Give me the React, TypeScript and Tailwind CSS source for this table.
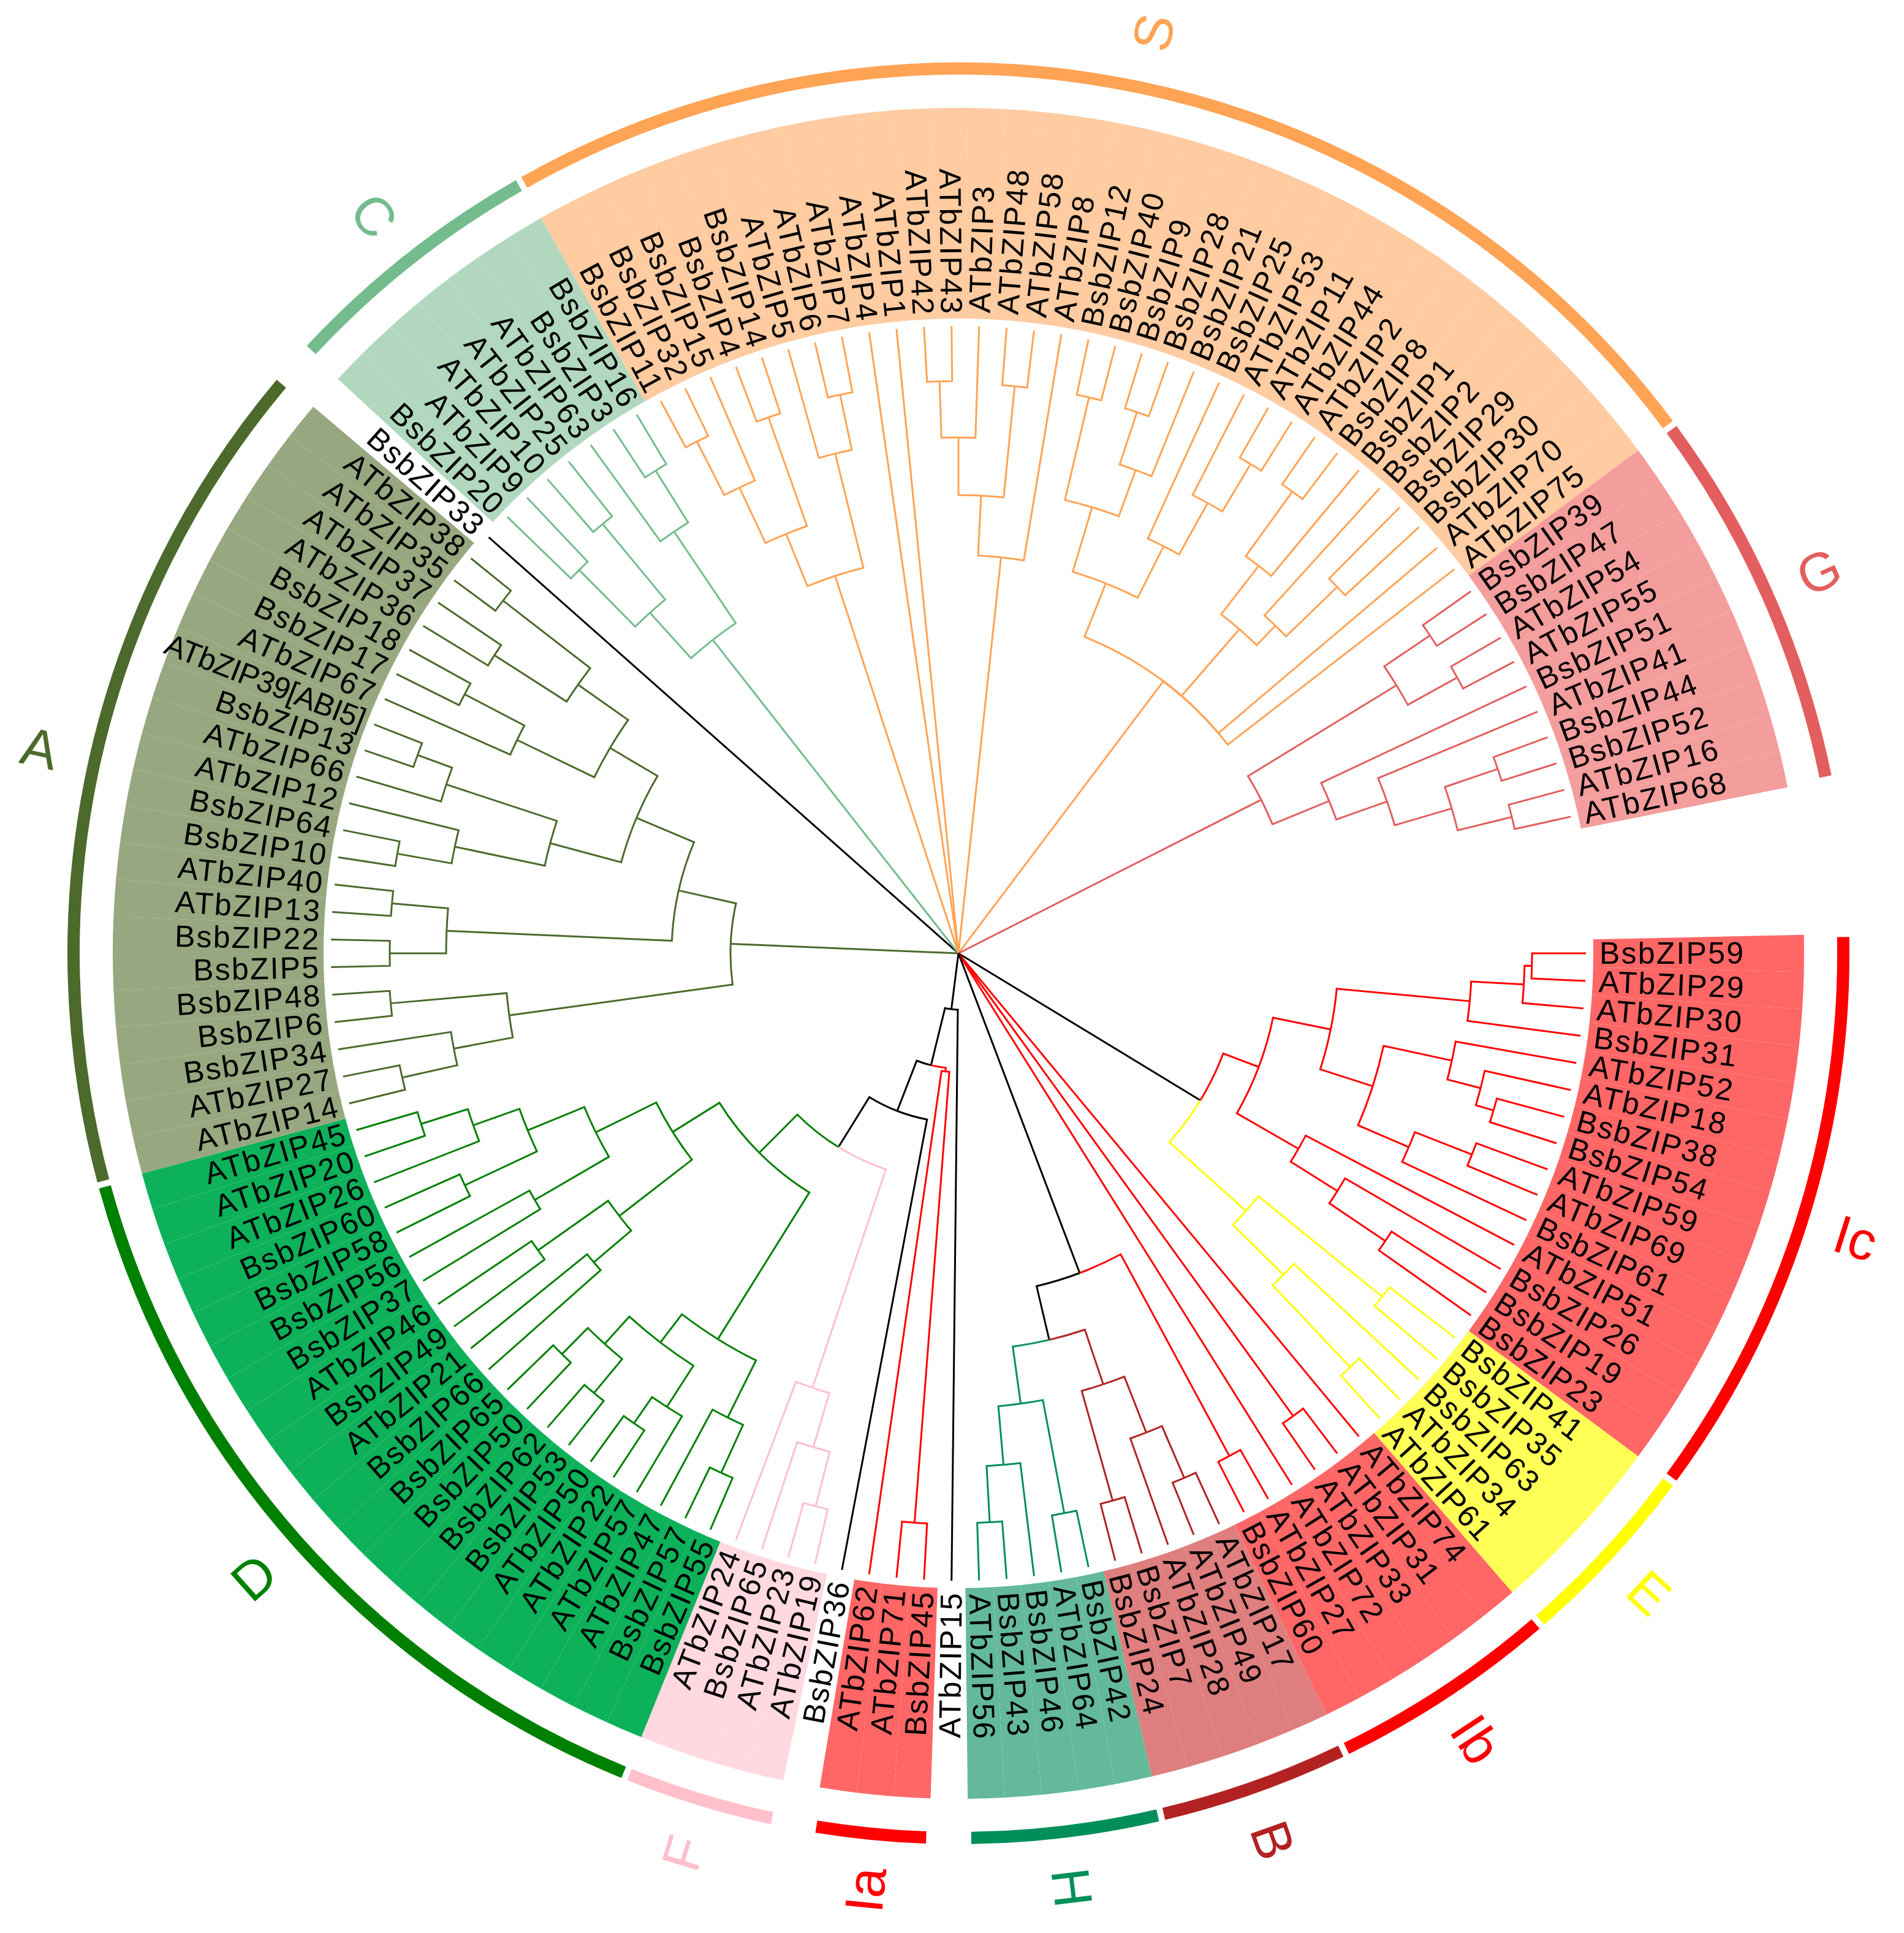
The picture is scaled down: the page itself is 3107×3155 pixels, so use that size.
import type { ReactElement } from 'react';

// circular bZIP tree — everything is laid out in half-size units, the svg scales it x2
const CX = 782;
const CY = 778;
const STEP = 360 / 143;
const R_TIP = 512;
const R_SHADE_IN = 518;
const R_SHADE_OUT = 690;
const R_LABEL = 523;
const R_RING = 722;
const R_LETTER = 768;

const names: string[] = [
  // Ic
  'BsbZIP59', 'ATbZIP29', 'ATbZIP30', 'BsbZIP31', 'ATbZIP52', 'ATbZIP18', 'BsbZIP38', 'BsbZIP54',
  'ATbZIP59', 'ATbZIP69', 'BsbZIP61', 'ATbZIP51', 'BsbZIP26', 'BsbZIP19', 'BsbZIP23',
  // E
  'BsbZIP41', 'BsbZIP35', 'BsbZIP63', 'ATbZIP34', 'ATbZIP61',
  // Ib
  'ATbZIP74', 'ATbZIP31', 'ATbZIP33', 'ATbZIP72', 'ATbZIP27', 'BsbZIP60',
  // B
  'ATbZIP17', 'ATbZIP49', 'ATbZIP28', 'BsbZIP7', 'BsbZIP24',
  // H
  'BsbZIP42', 'ATbZIP64', 'BsbZIP46', 'BsbZIP43', 'ATbZIP56',
  'ATbZIP15',
  // Ia
  'BsbZIP45', 'ATbZIP71', 'ATbZIP62',
  'BsbZIP36',
  // F
  'ATbZIP19', 'ATbZIP23', 'BsbZIP65', 'ATbZIP24',
  // D
  'BsbZIP55', 'BsbZIP57', 'ATbZIP47', 'ATbZIP57', 'ATbZIP22', 'ATbZIP50', 'BsbZIP53', 'BsbZIP62',
  'BsbZIP50', 'BsbZIP65', 'BsbZIP66', 'ATbZIP21', 'BsbZIP49', 'ATbZIP46', 'BsbZIP37', 'BsbZIP56',
  'BsbZIP58', 'BsbZIP60', 'ATbZIP26', 'ATbZIP20', 'ATbZIP45',
  // A
  'ATbZIP14', 'ATbZIP27', 'BsbZIP34', 'BsbZIP6', 'BsbZIP48', 'BsbZIP5', 'BsbZIP22', 'ATbZIP13',
  'ATbZIP40', 'BsbZIP10', 'BsbZIP64', 'ATbZIP12', 'ATbZIP66', 'BsbZIP13', 'ATbZIP39[ABI5]',
  'ATbZIP67', 'BsbZIP17', 'BsbZIP18', 'ATbZIP36', 'ATbZIP37', 'ATbZIP35', 'ATbZIP38',
  'BsbZIP33',
  // C
  'BsbZIP20', 'ATbZIP9', 'ATbZIP10', 'ATbZIP25', 'ATbZIP63', 'BsbZIP3', 'BsbZIP16',
  // S
  'BsbZIP11', 'BsbZIP32', 'BsbZIP15', 'BsbZIP4', 'BsbZIP14', 'ATbZIP5', 'ATbZIP6', 'ATbZIP7',
  'ATbZIP4', 'ATbZIP1', 'ATbZIP42', 'ATbZIP43', 'ATbZIP3', 'ATbZIP48', 'ATbZIP58', 'ATbZIP8',
  'BsbZIP12', 'BsbZIP40', 'BsbZIP9', 'BsbZIP28', 'BsbZIP21', 'BsbZIP25', 'ATbZIP53', 'ATbZIP11',
  'ATbZIP44', 'ATbZIP2', 'BsbZIP8', 'BsbZIP1', 'BsbZIP2', 'BsbZIP29', 'BsbZIP30', 'ATbZIP70',
  'ATbZIP75',
  // G
  'BsbZIP39', 'BsbZIP47', 'ATbZIP54', 'ATbZIP55', 'BsbZIP51', 'ATbZIP41', 'BsbZIP44', 'BsbZIP52',
  'ATbZIP16', 'ATbZIP68',
];

type Group = { id: string; from: number; to: number; shade: string; line: string };

const groups: Group[] = [
  { id: 'Ic', from: 0, to: 14, shade: '#ff6666', line: '#ff0000' },
  { id: 'E', from: 15, to: 19, shade: '#ffff55', line: '#ffff00' },
  { id: 'Ib', from: 20, to: 25, shade: '#ff6666', line: '#ff0000' },
  { id: 'B', from: 26, to: 30, shade: '#de7e7e', line: '#b22222' },
  { id: 'H', from: 31, to: 35, shade: '#63b999', line: '#008f5a' },
  { id: 'Ia', from: 37, to: 39, shade: '#ff6666', line: '#ff0000' },
  { id: 'F', from: 41, to: 44, shade: '#ffd8e0', line: '#ffc0cb' },
  { id: 'D', from: 45, to: 65, shade: '#0cb15a', line: '#008000' },
  { id: 'A', from: 66, to: 87, shade: '#97a77f', line: '#4b6a2b' },
  { id: 'C', from: 89, to: 95, shade: '#b1d8bf', line: '#74bc8e' },
  { id: 'S', from: 96, to: 128, shade: '#ffcba1', line: '#ffa355' },
  { id: 'G', from: 129, to: 138, shade: '#f49d9d', line: '#e35e5e' },
];

const groupOf = (i: number) => groups.find((g) => i >= g.from && i <= g.to);

type T = number | { r: number; c: T[] };
const n = (r: number, ...c: T[]): T => ({ r, c });

// topology read off the picture, node radii by eye
const Ic = n(262,
  n(310, n(419, n(462, n(468, 0, 1), 2), 3), n(355, n(412, 4, n(440, 5, n(455, 6, 7))), n(400, n(450, 8, 9), 10))),
  n(320, 11, n(365, 12, n(420, 13, 14))));
const E = n(315, n(445, 15, 16), n(373, 17, n(465, 18, 19)));
const B = n(371, n(464, 29, 30), n(420, 28, n(466, 26, 27)));
const H = n(371, n(419, n(465, 34, 35), 33), n(465, 31, 32));
const BH = n(279, n(466, 24, 25), n(324, B, H));
const Ia = n(97, 39, n(466, 37, 38));
const F = n(374, 44, n(420, 43, n(466, 41, 42)));
const Dl = n(371, n(423, n(466, 45, 46), 47),
  n(400, n(440, 48, n(466, 49, 50)), n(430, n(466, 51, 52), n(460, 53, 54))));
const Du = n(275, n(330, n(380, n(420, n(460, 64, 65), 63), n(445, 61, 62)), n(400, 59, 60)),
  n(350, n(420, 57, 58), n(390, 55, 56)));
const N1 = n(46, n(94, n(138, n(186, n(230, Dl, Du), F), 40), Ia), 36);
const Al = n(370, n(465, 69, 70), n(419, 68, n(465, 66, 67)));
const Auu = n(285, n(345, n(420, n(465, 75, 76), 77), n(440, 78, n(470, 79, 80))),
  n(330, n(400, 81, n(455, 82, 83)), n(380, n(450, 84, 85), n(470, 86, 87))));
const A = n(186, Al, n(234, n(418, n(464, 73, 74), n(464, 71, 72)), Auu));
const C = n(325, n(375, n(440, 89, 90), n(455, 91, 92)), n(415, 93, n(465, 94, 95)));
const Sl = n(324, n(370, n(420, n(469, 96, 97), 98), n(464, 99, 100)), n(420, 101, n(466, 102, 103)));
const St = n(325, n(374, n(421, n(467, 106, 107), 108), n(465, 109, 110)), 111);
const Sr = n(278,
  n(325, n(380, n(466, 112, 113), n(420, n(465, 114, 115), 116)), n(372, 117, n(420, 118, n(465, 119, 120)))),
  n(350, n(400, n(465, 121, 122), 123), n(372, 124, n(430, 125, 126))),
  127, 128);
const G = n(277, n(419, n(464, 129, 130), n(465, 131, 132)),
  n(327, 133, n(371, 134, n(419.5, n(465, 135, 136), n(465, 137, 138)))));
const root = n(0, A, 88, C, Sl, 104, 105, St, Sr, G, n(231, Ic, E), 20, n(466, 21, 22), 23, BH, N1);

const rad = (d: number) => (d * Math.PI) / 180;
const pt = (r: number, a: number): [number, number] => [CX + r * Math.sin(rad(a)), CY - r * Math.cos(rad(a))];
const slotAngle = (i: number) => 90 + i * STEP;

function angleOf(t: T): number {
  if (typeof t === 'number') return slotAngle(t);
  const as = t.c.map(angleOf);
  return (Math.min(...as) + Math.max(...as)) / 2;
}

function leaves(t: T): number[] {
  return typeof t === 'number' ? [t] : t.c.flatMap(leaves);
}

function colorOf(t: T) {
  const gs = leaves(t).map(groupOf);
  const g = gs[0];
  return g && gs.every((x) => x === g) ? g.line : '#000000';
}

function drawBranches(t: T, out: ReactElement[]) {
  if (typeof t === 'number') return;
  const a = angleOf(t);
  t.c.forEach((ch) => {
    const ca = angleOf(ch);
    const cr = typeof ch === 'number' ? R_TIP : ch.r;
    const [x2, y2] = pt(cr, ca);
    let d: string;
    if (t.r === 0) {
      d = `M${CX} ${CY}L${x2} ${y2}`;
    } else {
      const [x0, y0] = pt(t.r, a);
      const [x1, y1] = pt(t.r, ca);
      d = `M${x0} ${y0}A${t.r} ${t.r} 0 0 ${ca > a ? 1 : 0} ${x1} ${y1}L${x2} ${y2}`;
    }
    out.push(<path key={`b${out.length}`} d={d} stroke={colorOf(ch)} strokeWidth={1.5} fill="none" />);
    drawBranches(ch, out);
  });
}

const rotFor = (a: number) => {
  const m = ((a % 360) + 360) % 360;
  return m < 180 ? { rot: m - 90, right: true } : { rot: m + 90, right: false };
};

function arcPath(r: number, a0: number, a1: number) {
  const [x0, y0] = pt(r, a0);
  const [x1, y1] = pt(r, a1);
  return `M${x0} ${y0}A${r} ${r} 0 ${a1 - a0 > 180 ? 1 : 0} 1 ${x1} ${y1}`;
}

export default function App() {
  const branches: ReactElement[] = [];
  drawBranches(root, branches);

  const wedges = names.map((_, i) => {
    const g = groupOf(i);
    if (!g) return null;
    const a0 = slotAngle(i) - STEP / 2;
    const a1 = slotAngle(i) + STEP / 2;
    const [ax, ay] = pt(R_SHADE_IN, a0);
    const [bx, by] = pt(R_SHADE_OUT, a0);
    const [cx, cy] = pt(R_SHADE_OUT, a1);
    const [dx, dy] = pt(R_SHADE_IN, a1);
    const d = `M${ax} ${ay}L${bx} ${by}A${R_SHADE_OUT} ${R_SHADE_OUT} 0 0 1 ${cx} ${cy}L${dx} ${dy}A${R_SHADE_IN} ${R_SHADE_IN} 0 0 0 ${ax} ${ay}Z`;
    return <path key={`w${i}`} d={d} fill={g.shade} />;
  });

  const labels = names.map((name, i) => {
    const a = slotAngle(i);
    const { rot, right } = rotFor(a);
    const [x, y] = pt(right ? R_LABEL : R_LABEL - 2, a);
    return (
      <text
        key={`l${i}`}
        x={x}
        y={y}
        transform={`rotate(${rot} ${x} ${y})`}
        textAnchor={right ? 'start' : 'end'}
        dominantBaseline="central"
        fontSize={25}
        letterSpacing={name.includes('[') ? -0.4 : 1.1}
        fill="#000000"
      >
        {name}
      </text>
    );
  });

  const rings = groups.map((g) => (
    <path
      key={`r${g.id}`}
      d={arcPath(R_RING, slotAngle(g.from) - STEP / 2 + 0.2, slotAngle(g.to) + STEP / 2 - 0.2)}
      stroke={g.line}
      strokeWidth={10}
      fill="none"
    />
  ));

  const letters = groups.map((g) => {
    const a = (slotAngle(g.from) + slotAngle(g.to)) / 2;
    const { rot } = rotFor(a);
    const [x, y] = pt(R_LETTER, a);
    return (
      <text
        key={`t${g.id}`}
        x={x}
        y={y}
        transform={`rotate(${rot} ${x} ${y})`}
        textAnchor="middle"
        dominantBaseline="central"
        fontSize={44}
        fill={g.line}
      >
        {g.id}
      </text>
    );
  });

  return (
    <div className="w-[3107px] h-[3155px] bg-white">
      <svg
        width={3107}
        height={3155}
        viewBox="0 0 1553.5 1577.5"
        className="block"
        fontFamily="'Liberation Sans', Arial, sans-serif"
      >
        {wedges}
        {branches}
        {labels}
        {rings}
        {letters}
      </svg>
    </div>
  );
}
